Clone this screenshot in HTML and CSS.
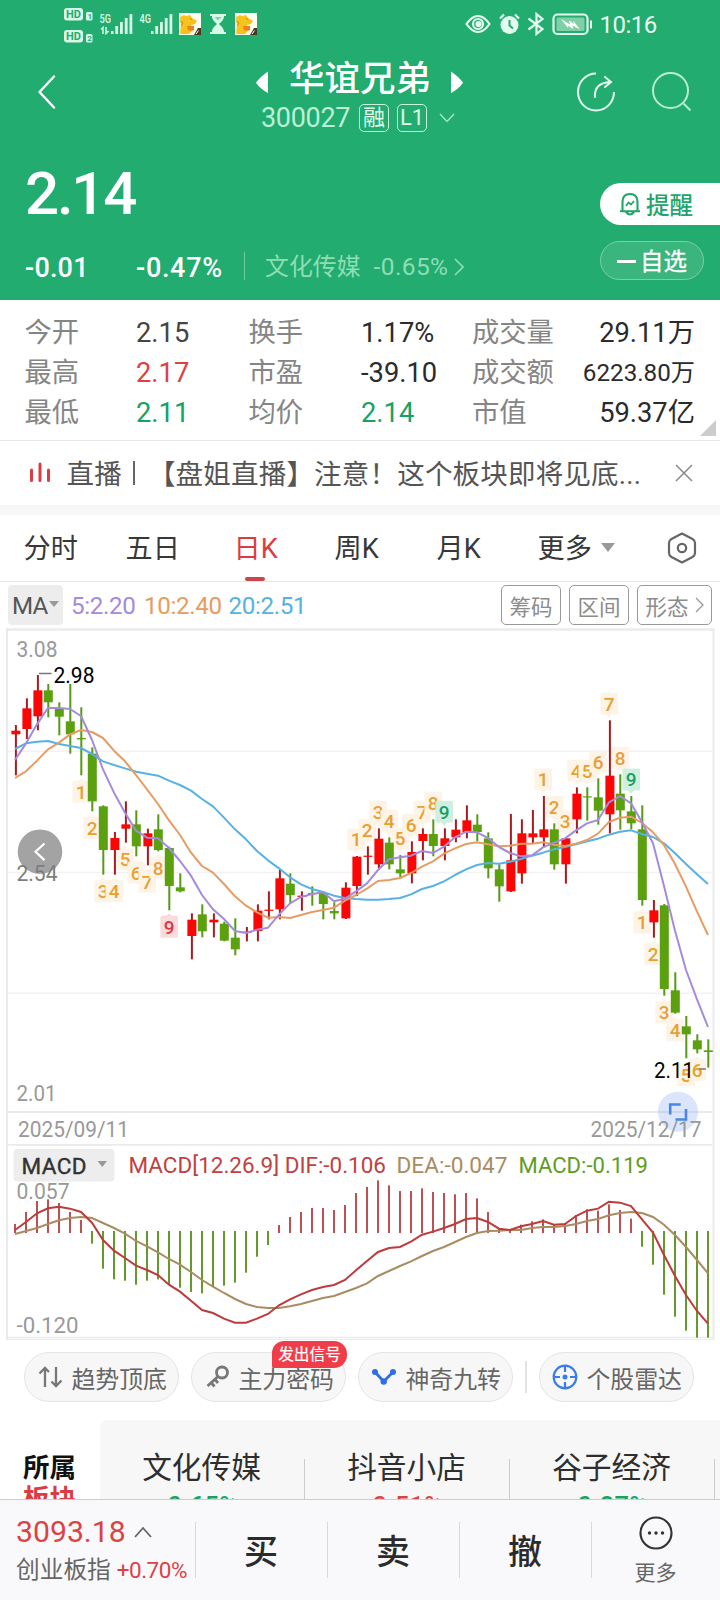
FILE: index.html
```html
<!DOCTYPE html>
<html lang="zh-CN">
<head>
<meta charset="utf-8">
<title>华谊兄弟 300027</title>
<link rel="stylesheet" href="styles.css">
</head>
<body>
<div class="app">
  <header class="quote">
    <div class="status">
      <svg class="status-left" width="200" height="44" viewBox="60 0 200 44">
        <g fill="#d9f9e8">
          <rect x="64" y="8" width="19" height="12.5" rx="3"/>
          <rect x="86" y="12" width="6.500" height="8.500" rx="1.500"/>
          <rect x="64" y="30" width="19" height="12.500" rx="3"/>
          <rect x="86" y="34" width="6.500" height="8.500" rx="1.500"/>
        </g>
        <g class="tiny-dark">
          <text x="66" y="18.300" textLength="15">HD</text><text class="sub" x="87.500" y="19">1</text>
          <text x="66" y="40.300" textLength="15">HD</text><text class="sub" x="87.200" y="41">2</text>
        </g>
        <g class="tiny-light">
          <text x="99.500" y="23" textLength="11.500" lengthAdjust="spacingAndGlyphs">5G</text>
          <text x="139.500" y="23" textLength="11.500" lengthAdjust="spacingAndGlyphs">4G</text>
        </g>
        <path d="M101 29.500l2-2v6.500M106 27v6.500l2.500-2.500" fill="none" stroke="#d9f9e8" stroke-width="1.500"/>
        <g fill="#d9f9e8">
          <path d="M111 31h2.500v3H111zM115.300 26h2.800v8h-2.800zM120 22h2.800v12H120zM124.800 18h2.800v16h-2.800zM129.500 14h2.800v20h-2.800z"/>
          <path d="M151 31h2.500v3H151zM155.300 26h2.800v8h-2.800zM160 22h2.800v12H160zM164.800 18h2.800v16h-2.800zM169.500 14h2.800v20h-2.800z"/>
          <path d="M210 14h16v2h-2c0 4-3 6-5 8 2 2 5 4 5 8h2v2h-16v-2h2c0-4 3-6 5-8-2-2-5-4-5-8h-2z"/>
        </g>
        <path d="M214.500 17h7l-3.500 3.500z" fill="#22ac6f" opacity=".5"/>
        <g id="mascot">
          <rect x="179" y="13" width="22" height="22" fill="#fffdf0"/>
          <path d="M180 17l4-2 2 1 4-1 2 3 5 3-2 3-4 1 1 6-3 3h-9c1-3 0-5 1-8z" fill="#f7c21b"/>
          <path d="M187 26h7v4.500h-6z" fill="#ee8020"/><path d="M180 21l3 2-2 3M190 19h2" stroke="#c98a10" fill="none"/>
          <path d="M194 35l4-7h3v7z" fill="#47391f"/><path d="M196 34l2.500-3.500" stroke="#fff"/>
        </g>
        <use href="#mascot" x="56"/>
      </svg>
      <svg class="status-right" width="130" height="44" viewBox="462 0 130 44">
        <g fill="none" stroke="#e4fbef" stroke-width="2.200">
          <path d="M466.500 24q5.500-8 11.500-8t11.500 8q-5.500 8-11.500 8t-11.500-8z"/>
          <circle cx="478" cy="24" r="5"/><circle cx="478.500" cy="24" r="2" fill="#e4fbef"/>
          <path d="M500 18.500l4-4M519 18.500l-4-4"/>
          <path d="M528.500 18.500l14 10.500-6 5V14l6 5-14 10.500"/>
          <rect x="553.500" y="14.500" width="34" height="19.500" rx="4"/>
        </g>
        <circle cx="509.500" cy="25" r="9" fill="#e4fbef"/><path d="M509.500 20v5.500l3.500 3" fill="none" stroke="#22ac6f" stroke-width="2"/>
        <path d="M590 20.500h2v8h-2z" fill="#e4fbef"/>
        <rect x="556.500" y="17.500" width="28" height="13.500" rx="1.500" fill="#7fd0a8"/>
        <path d="M561 19l9 5.500-1-4 5 3.500-1-3.500 7 9-7.500-4 1 3.500-6-3.500 1 3z" fill="#fff"/>
      </svg>
      <span class="clock">10:16</span>
    </div>
    <div class="titlebar">
      <svg class="back" width="20" height="36" viewBox="0 0 20 36"><path d="M17 2.500L2.500 18 17 33.500" fill="none" stroke="#fff" stroke-width="2.500" stroke-linecap="round" stroke-linejoin="round"/></svg>
      <div class="stock">
        <div class="stock-name">
          <svg width="13" height="24" viewBox="0 0 13 24"><path d="M0 12.500Q4 6 12 0v24Q4 19 0 12.500z" transform="translate(0 2.500) scale(1 .9)" fill="#fff"/></svg>
          <h1>华谊兄弟</h1>
          <svg width="13" height="24" viewBox="0 0 13 24"><path d="M12 12.500Q8 6 0 0v24Q8 19 12 12.500z" transform="translate(0 2.500) scale(1 .9)" fill="#fff"/></svg>
        </div>
        <div class="stock-code"><span class="code">300027</span><span class="badge">融</span><span class="badge">L1</span>
          <svg width="16" height="10" viewBox="0 0 16 10"><path d="M1 1l7 7.500L15 1" fill="none" stroke="#a6e3c5" stroke-width="1.500"/></svg></div>
      </div>
      <div class="actions">
        <svg width="40" height="42" viewBox="0 0 40 42" fill="none" stroke="#e6fbf0" stroke-width="2"><path d="M20 2.500A18 18.500 0 1 0 38 21"/><path d="M19 26q-1-14 15-15M29 6l6 5-6 5" stroke-linecap="round"/></svg>
        <svg width="42" height="42" viewBox="0 0 42 42" fill="none" stroke="#b9ecd2" stroke-width="2"><circle cx="19.500" cy="19.500" r="17.500"/><path d="M32.500 32.500l7 7"/></svg>
      </div>
    </div>
    <div class="price-row">
      <strong class="price">2.14</strong>
      <button class="remind"><svg width="22" height="24" viewBox="0 0 22 24" fill="none" stroke="#22a56b" stroke-width="2.100"><path d="M3.500 19V10Q3.500 2 11 2t7.500 8v9M1 19.300h20M7 20q4 5 8 0"/><path d="M7 14l2.500-3.500 2.500 2 3-3.500" stroke-width="1.700"/></svg>提醒</button>
    </div>
    <div class="change-row">
      <span class="chg">-0.01</span><span class="pct">-0.47%</span>
      <span class="sector"><span>文化传媒</span><span class="sector-pct">-0.65%</span><svg width="10" height="18" viewBox="0 0 10 18"><path d="M1 1l8 8-8 8" fill="none" stroke="#8fddb6" stroke-width="1.600"/></svg></span>
      <button class="watch"><i></i>自选</button>
    </div>
  </header>

  <section class="stats">
    <span class="k">今开</span><span class="v">2.15</span><span class="k">换手</span><span class="v dark">1.17%</span><span class="k">成交量</span><span class="v dark r">29.11万</span>
    <span class="k">最高</span><span class="v up">2.17</span><span class="k">市盈</span><span class="v dark">-39.10</span><span class="k">成交额</span><span class="v dark r small">6223.80万</span>
    <span class="k">最低</span><span class="v down">2.11</span><span class="k">均价</span><span class="v down">2.14</span><span class="k">市值</span><span class="v dark r">59.37亿</span>
    <i class="corner"></i>
  </section>

  <section class="notice">
    <svg width="22" height="22" viewBox="0 0 22 22" stroke="#dd3c42" stroke-width="3" stroke-linecap="round"><path d="M2.500 8v10.500M11 2v16.500M19.500 8v10.500"/></svg>
    <p><span>直播</span><i></i><span>【盘姐直播】注意！这个板块即将见底...</span></p>
    <svg width="18" height="18" viewBox="0 0 18 18"><path d="M1 1l16 16M17 1L1 17" stroke="#888" stroke-width="1.500"/></svg>
  </section>

  <nav class="tabs">
    <span class="tab t1">分时</span><span class="tab t2">五日</span><span class="tab t3 on">日K</span><span class="tab t4">周K</span><span class="tab t5">月K</span><span class="tab t6">更多<i class="tri"></i></span>
    <svg width="30" height="32" viewBox="0 0 30 32" fill="none" stroke="#666" stroke-width="2.200"><path d="M15 1.500l10.500 5.500q2.500 1.500 2.500 4v10q0 2.500-2.500 4L15 30.500 4.500 25Q2 23.500 2 21V11q0-2.500 2.500-4z" stroke-linejoin="round"/><circle cx="15" cy="16" r="4.200"/></svg>
  </nav>

  <section class="ma">
    <span class="ma-btn">MA<i class="tri"></i></span>
    <span class="m5">5:2.20</span><span class="m10">10:2.40</span><span class="m20">20:2.51</span>
    <span class="chips"><button>筹码</button><button>区间</button><button class="wide">形态<svg width="9" height="16" viewBox="0 0 9 16"><path d="M1 1l7 7-7 7" fill="none" stroke="#999" stroke-width="1.300"/></svg></button></span>
  </section>

  <svg class="chart" id="chart" width="720" height="712" viewBox="0 628 720 712">
    <g fill="#ebebeb">
      <path d="M6 628.200h708v2.600H6z"/><path d="M6 628h2v712H6zM712.500 628h2v712h-2z"/>
      <path d="M8 750.500h704v1.500H8zM8 871.800h704v1.500H8zM8 992.500h704v1.500H8z" fill="#f2f2f2"/>
      <path d="M8 1111h704v2H8zM8 1144h704v1.800H8zM6 1336.800h708v1.400H6zM6 1339h708v1H6z"/>
    </g>
    <g class="axis">
      <text x="16.500" y="656.700" textLength="41" lengthAdjust="spacingAndGlyphs">3.08</text>
      <text x="16.500" y="1101" textLength="40" lengthAdjust="spacingAndGlyphs">2.01</text>
      <text x="18" y="1136.700" textLength="111" lengthAdjust="spacingAndGlyphs">2025/09/11</text>
      <text x="16.500" y="1199" textLength="53" lengthAdjust="spacingAndGlyphs">0.057</text>
      <text x="16.500" y="1332.700" textLength="62" lengthAdjust="spacingAndGlyphs">-0.120</text>
    </g>
    <g id="tags"></g>
    <g id="candles"></g>
    <g id="lines" fill="none" stroke-width="2" stroke-linejoin="round"></g>
    <g id="macd"></g>
    <path d="M39 673.500h12.500M699 1069h7" stroke="#777" stroke-width="1.500"/>
    <g class="peak">
      <text x="53.500" y="682.700" textLength="41" lengthAdjust="spacingAndGlyphs">2.98</text>
      <text x="654" y="1077.500" textLength="40" lengthAdjust="spacingAndGlyphs">2.11</text>
    </g>
    <circle cx="40" cy="851.700" r="22.300" fill="#a3a3a3"/>
    <path d="M44.500 843.500l-9 8.300 9 8.300" fill="none" stroke="#fff" stroke-width="2.200"/>
    <text class="axis-over" x="16.500" y="880.900" textLength="41" lengthAdjust="spacingAndGlyphs">2.54</text>
    <circle cx="678" cy="1111.700" r="20" fill="#4a84f0" opacity=".2"/>
    <g class="axis"><text x="590.500" y="1136.700" textLength="111" lengthAdjust="spacingAndGlyphs">2025/12/17</text></g>
    <path d="M670.200 1114.500v-10h10.500M686 1109v10.500h-10.500" fill="none" stroke="#4a86e6" stroke-width="2.600"/>
    <rect x="13.500" y="1149" width="101" height="32.500" rx="4" fill="#ededed"/>
    <path d="M97.500 1161h9.500l-4.700 6z" fill="#999"/>
    <g class="legend">
      <text class="lg-btn" x="21.500" y="1173.500" textLength="65">MACD</text>
      <text x="128.500" y="1172.700" textLength="257.500" lengthAdjust="spacingAndGlyphs" fill="#c0413f">MACD[12.26.9] DIF:-0.106</text>
      <text x="396.500" y="1172.700" textLength="111" lengthAdjust="spacingAndGlyphs" fill="#a98c62">DEA:-0.047</text>
      <text x="518.500" y="1172.700" textLength="129.500" lengthAdjust="spacingAndGlyphs" fill="#5f9c22">MACD:-0.119</text>
    </g>
  </svg>

  <section class="tools">
    <button class="pill"><svg width="25" height="24" viewBox="0 0 25 24" fill="none" stroke="#777" stroke-width="2.300"><path d="M7 22V3M1.500 8.500L7 3l4 4M18 2v19M13.500 16.500l4.500 4.500 5.500-5.500"/></svg>趋势顶底</button>
    <button class="pill"><svg width="24" height="24" viewBox="0 0 24 24" fill="none" stroke="#777" stroke-width="2.800"><circle cx="16" cy="7.500" r="5.500"/><path d="M12 11.500L1.500 21M5 17.500l3.500 4M9 14.500l3 3.500"/></svg>主力密码<em>发出信号</em></button>
    <button class="pill"><svg width="26" height="24" viewBox="0 0 26 24"><path d="M4 7l8.700 9.500L22 7" fill="none" stroke="#2f6fe4" stroke-width="2.800"/><g fill="#2f6fe4"><circle cx="4" cy="7" r="3"/><circle cx="12.700" cy="16.500" r="3.200"/><circle cx="22" cy="7" r="3"/></g></svg>神奇九转</button>
    <i class="bar"></i>
    <button class="pill"><svg width="26" height="26" viewBox="0 0 26 26" fill="none" stroke="#3b7de8" stroke-width="2.200"><circle cx="13" cy="13" r="11.300"/><path d="M13 2v6M13 18v6M2 13h6M18 13h6"/><circle cx="13" cy="13" r="1.400" fill="#3b7de8"/></svg>个股雷达</button>
  </section>

  <section class="blocks">
    <div class="blocks-title"><span>所属</span><span class="red">板块</span></div>
    <div class="blocks-list">
      <div class="cell"><b>文化传媒</b><span class="down">-0.65%</span></div>
      <div class="cell"><b>抖音小店</b><span class="up">-0.51%</span></div>
      <div class="cell"><b>谷子经济</b><span class="down">-0.27%</span></div>
    </div>
  </section>

  <footer class="trade">
    <div class="index">
      <div class="index-val">3093.18<svg width="18" height="12" viewBox="0 0 18 12"><path d="M1 11l8-9 8 9" fill="none" stroke="#666" stroke-width="1.800"/></svg></div>
      <div class="index-name">创业板指<span>+0.70%</span></div>
    </div>
    <div class="act">买</div><div class="act">卖</div><div class="act">撤</div>
    <div class="more"><svg width="34" height="34" viewBox="0 0 34 34"><circle cx="17" cy="17" r="15.500" fill="none" stroke="#333" stroke-width="2.200"/><g fill="#333"><circle cx="10.500" cy="17" r="1.700"/><circle cx="17" cy="17" r="1.700"/><circle cx="23.500" cy="17" r="1.700"/></g></svg><span>更多</span></div>
  </footer>
</div>
<script src="chart.js"></script>
</body>
</html>
```

FILE: styles.css
```css
* { box-sizing: border-box; }
body { margin: 0; background: #fff; font-family: Roboto, "Noto Sans CJK SC", sans-serif; color: #333; text-spacing-trim: space-all; }
button { font: inherit; color: inherit; border: 0; padding: 0; margin: 0; background: none; white-space: nowrap; }
h1, p { margin: 0; }
i, em { font-style: normal; display: block; }
svg { display: block; flex: none; }
.app { width: 720px; height: 1600px; overflow: hidden; display: flex; flex-direction: column; }
.up { color: #db4343; }
.down { color: #14a362; }

/* header */
.quote { height: 300px; flex: none; background: #22ac6f; color: #fff; }
.status { height: 50px; padding-left: 60px; display: flex; align-items: flex-start; }
.status-right { margin-left: 202px; }
.clock { margin: 8.500px 0 0 7.500px; font-size: 24px; line-height: 32px; letter-spacing: -.5px; color: #e9fcf2; }
.tiny-dark text { font: 700 11px Roboto, sans-serif; fill: #22ac6f; }
.tiny-dark .sub { font-size: 8px; }
.tiny-light text { font: 500 13px Roboto, sans-serif; fill: #d9f9e8; }
.titlebar { height: 90px; display: grid; grid-template-columns: 200px 1fr 200px; }
.back { margin: 24px 0 0 37px; }
.stock { padding-top: 7px; }
.stock-name { display: flex; align-items: center; justify-content: center; gap: 20px; height: 44px; }
.stock-name svg { margin-top: 3px; }
.stock-name h1 { font-size: 35.500px; font-weight: 500; line-height: 44px; }
.stock-code { display: flex; align-items: center; height: 33px; padding-left: 61px; }
.code { font-size: 27px; color: #bdf0d6; letter-spacing: -.3px; width: 98px; padding-top: 1px; }
.badge { width: 30px; height: 28px; margin-right: 8px; border: 1.500px solid #c9f3dd; border-radius: 5px; font-size: 22px; line-height: 26px; text-align: center; color: #dffaec; }
.badge + .badge { margin-right: 12px; }
.actions { display: flex; padding: 21px 0 0 56px; gap: 35px; }
.price-row { height: 95px; display: flex; justify-content: space-between; padding-left: 25px; }
.price { font-size: 60px; font-weight: 500; line-height: 60px; padding-top: 24px; letter-spacing: -2.200px; }
.remind { align-self: flex-start; margin-top: 43px; width: 120px; height: 42px; border-radius: 21px 0 0 21px; background: #fff; color: #22a56b; font-size: 23.500px; font-weight: 500; display: flex; align-items: center; gap: 5px; padding-left: 19px; }
.change-row { height: 65px; display: flex; padding-left: 25px; font-size: 27px; line-height: 66px; }
.chg { width: 111px; letter-spacing: .2px; font-weight: 500; }
.pct { width: 108px; letter-spacing: .7px; font-weight: 500; }
.sector { display: flex; align-items: center; font-size: 23.900px; color: #8fddb6; flex: 1; height: 28px; margin-top: 17px; border-left: 1.500px solid #6ecb9e; padding: 2px 0 0 20px; }
.sector-pct { margin: 0 6px 0 13px; font-size: 24.500px; letter-spacing: .4px; }
.watch { width: 104px; height: 39px; margin: 6px 16px 0 0; border: 1.500px solid #7ad0a6; border-radius: 20px; background: #3ab57e; font-size: 23.500px; line-height: 38px; display: flex; align-items: center; justify-content: center; gap: 4px; -webkit-text-stroke: .3px #fff; padding-top: 2px; }
.watch i { width: 19px; height: 2.200px; background: #fff; }

/* key figures */
.stats { position: relative; height: 141px; flex: none; padding: 13px 25px 0 24.500px; border-bottom: 1px solid #e6e6e6; display: grid; grid-template-columns: 111.500px 112.500px 112.500px 111px 96px 1fr; grid-auto-rows: 40px; font-size: 27.300px; line-height: 40px; white-space: nowrap; }
.k { color: #858585; }
.v { color: #444; }
.v.up { color: #db4343; }
.v.down { color: #14a362; }
.v.dark { color: #2b2b2b; }
.r { text-align: right; }
.small { font-size: 24.200px; }
.corner { position: absolute; right: 4px; bottom: 4px; border: 8px solid transparent; border-right-color: #ccc; border-bottom-color: #ccc; }

/* live notice */
.notice { height: 74px; flex: none; border-bottom: 10px solid #f7f7f7; padding: 0 27px 0 29px; display: flex; align-items: center; }
.notice p { width: 608px; margin-left: 15.500px; padding-top: 3px; display: flex; align-items: center; font-size: 27.500px; line-height: 40px; color: #555; white-space: nowrap; letter-spacing: .2px; }
.notice p i { width: 2px; height: 24px; margin: 0 13px 3px 11px; background: #666; }

/* period tabs */
.tabs { height: 67px; flex: none; border-bottom: 1.500px solid #e6e6e6; display: flex; align-items: center; padding-left: 23.500px; font-size: 27.200px; color: #383838; }
.tab { position: relative; line-height: 64px; padding-top: 2px; white-space: nowrap; }
.t1 { width: 102px; } .t2 { width: 108px; } .t3 { width: 101px; } .t4 { width: 102px; } .t5 { width: 101px; } .t6 { width: 129.500px; display: flex; align-items: center; gap: 9px; }
.on { color: #dd3b42; }
.on::after { content: ""; position: absolute; left: 11px; bottom: 0; width: 20px; height: 4px; border-radius: 2px; background: #c9474c; }
.tri { border: 7px solid transparent; border-top: 9px solid #999; border-bottom: 0; }
.t6 .tri { margin-top: -3px; }

/* moving averages */
.ma { height: 46px; flex: none; display: flex; align-items: center; padding: 0 8px; font-size: 24.200px; white-space: nowrap; }
.ma-btn { width: 55px; height: 40px; margin-right: 8px; border-radius: 4px; background: #ededed; color: #555; padding: 1px 0 0 4px; display: flex; align-items: center; letter-spacing: -.8px; }
.ma-btn .tri { border-width: 6px 5px 0; margin: -4px 0 0 1px; }
.m5 { width: 73px; color: #a58bdc; }
.m10 { width: 84.500px; color: #e89c62; }
.m20 { color: #55b2e2; }
.m5, .m10, .m20 { letter-spacing: -.35px; padding-top: 1px; }
.chips { margin-left: auto; display: flex; gap: 8px; }
.chips button { width: 60px; height: 40px; border: 1.500px solid #999; border-radius: 5px; font-size: 21.500px; color: #8c8c8c; display: flex; align-items: center; justify-content: center; gap: 6px; }
.chips .wide { width: 75px; }

/* chart */
.chart { flex: none; font-family: Roboto, sans-serif; }
.axis text, .axis-over { font-size: 22px; fill: #999; }
.axis .axis-over, .axis-over { fill: #7d7d7d; }
.peak text { font-size: 22px; fill: #000; }
.legend text { font-size: 22px; stroke-width: .2px; }
.legend .lg-btn { font-size: 22.500px; fill: #333; stroke: #333; stroke-width: .4px; }
.tag { font-size: 19px; font-weight: 500; text-anchor: middle; }

/* tool pills */
.tools { height: 80px; flex: none; display: flex; padding: 12px 0 0 24px; gap: 12px; }
.pill { position: relative; width: 155px; height: 50px; border: 1.500px solid #e4e4e4; border-radius: 25px; background: #f7f7f7; font-size: 23.900px; color: #666; display: flex; align-items: center; justify-content: flex-end; gap: 8px; padding-right: 11px; }
.pill em { position: absolute; left: 80px; top: -12.500px; width: 75px; height: 27px; border-radius: 12px 13px 13px 2px; background: #ef3e4a; color: #fff; font-size: 15.700px; line-height: 27px; text-align: center; -webkit-text-stroke: .2px #fff; }
.bar { width: 2px; height: 32px; margin: 9px 0 0; background: #e2e2e2; }

/* sector blocks */
.blocks { height: 79px; flex: none; overflow: hidden; display: flex; }
.blocks-title { width: 100px; padding: 32px 0 0 23px; font-size: 26.500px; font-weight: 700; line-height: 31px; color: #111; }
.blocks-title span { display: block; }
.blocks-title .red { color: #dd3b42; }
.blocks-list { flex: 1; height: 140px; background: #f7f7f7; border-top-left-radius: 8px; display: flex; overflow: hidden; }
.cell { position: relative; width: 205px; flex: none; text-align: center; padding-top: 26px; }
.cell::after { content: ""; position: absolute; right: 0; top: 39px; width: 1px; height: 60px; background: #ccc; }
.cell b { display: block; font-size: 29.700px; font-weight: 400; line-height: 44px; color: #2e2e2e; margin-right: 2px; }
.cell span { display: block; font-size: 25.500px; font-weight: 500; line-height: 30px; margin: 1px 8px 0 0; letter-spacing: .3px; }

/* trade bar */
.trade { height: 101px; flex: none; border-top: 1.500px solid #ccc; background: #f9f9fb; display: flex; }
.index { width: 195px; flex: none; padding: 14px 0 0 16px; white-space: nowrap; }
.index-val { font-size: 30.200px; line-height: 36px; color: #db4343; display: flex; align-items: center; gap: 8px; }
.index-name { font-size: 23.700px; line-height: 36px; margin-top: 2px; color: #666; display: flex; gap: 6px; }
.index-name span { font-size: 22.500px; color: #db4343; letter-spacing: -.5px; }
.act { width: 132px; flex: none; text-align: center; font-size: 34px; font-weight: 500; line-height: 105px; color: #2b2b2b; background: linear-gradient(#d8d8d8, #d8d8d8) 0 22px / 1px 56px no-repeat; }
.more { flex: 1; background: linear-gradient(#d8d8d8, #d8d8d8) 0 22px / 1px 56px no-repeat; display: flex; flex-direction: column; align-items: center; padding-top: 16px; font-size: 21px; line-height: 34px; color: #666; gap: 6px; }
```

FILE: chart.js
```javascript
// Candles: direction, high, body top, body bottom, low. Each group is measured
// in thirds of a pixel from its own vertical origin.
var groups = [
  [620, [['R',315,332,343,466],['R',235,265,327,357],['R',165,211,289,331],['G',192,211,247,292],['G',247,265,290,346],['G',192,304,343,401],['G',262,354,358,466],['G',382,401,544,574],['G',556,559,690,764],['R',636,654,690,764],['R',544,613,626,668],['G',571,613,679,709],['R',626,640,679,736],['G',583,628,690,694],['G',680,684,798,871],['G',760,802,814,817],['R',880,899,948,1018],['G',853,883,934,952],['R',880,899,907,952],['G',905,911,962,964],['G',895,953,988,1006],['R',921,935,938,964]]],
  [740, [['R',493,512,573,604],['R',454,509,512,538],['R',389,415,508,538],['G',400,431,465,490],['R',454,467,469,512],['G',439,459,462,497],['G',455,459,492,538],['G',487,513,520,538],['R',427,443,535,537],['R',348,350,438,468],['R',319,347,350,404],['R',265,296,373,385],['G',292,308,373,388],['G',345,388,400,412],['R',304,336,400,430],['R',265,282,303,361],['G',238,282,318,349],['R',265,295,318,361],['R',238,269,292,307],['R',196,241,277,295],['G',223,254,276,303]]],
  [660, [['G',517,535,625,655],['G',613,628,679,725],['R',462,601,694,696],['R',478,520,640,671],['R',450,520,532,550],['R',408,508,532,562],['G',490,508,613,629],['R',534,535,613,671],['R',382,401,478,520],['G',382,409,412,482],['G',355,412,452,494],['R',181,347,463,520],['G',343,401,451,509],['G',408,454,490,508],['G',436,508,720,737]]],
  [880, [['R',60,91,127,173],['G',72,76,327,347],['G',277,331,398,401],['G',408,439,463,535],['G',463,481,508,520],['G',478,511,516,563]]]
];
var averages = {
  '#55b2e2': [[620,[387,370,365,363,372,378,384,402,424,435,445,455,461,467,482,495,512,537,559,593,628]],[740,[298,333,361,385,412,433,447,456,467,474,477,479,479,477,474,463,447,438,424,405,388,375]],[660,[609,611,605,597,587,578,568,561,553,544,536,524,515,511,522,531,550,580,612,643,672]]],
  '#e89c62': [[620,[474,454,422,388,368,343,330,336,354,392,424,465,508,552,601,645,698,738,758,792,829]],[740,[497,517,533,531,534,525,516,510,503,482,465,446,423,420,414,399,380,364,341,325,312,307]],[660,[553,559,557,551,551,547,554,558,551,540,521,486,473,470,489,517,555,612]],[880,[20,95,165]]],
  '#a58bdc': [[620,[420,370,313,264,264,267,288,360,448,518,578,632,653,655,684,723,767,825,868,897,933]],[740,[579,569,563,524,490,471,462,457,484,476,454,430,390,358,352,347,333,339,320,292,275,277]],[660,[534,561,579,589,586,562,548,535,511,490,480,427,408,430,487,550]],[880,[18,152,270,358,441]]]
};
var bars = [282,246,213,208,219,246,270,341,416,448,452,464,452,448,465,473,486,490,468,467,458,428,380,345,285,261,246,234,234,240,225,189,171,151,166,183,183,175,186,189,193,189,205,246,295,300,284,274,268,285,280,255,238,242,223,240,266,350,404,494,560,602,623,623];
var dif = [300,276,250,235,230,236,246,278,330,362,384,407,420,435,464,485,512,540,549,566,578,578,566,552,526,508,493,480,471,465,450,421,393,366,354,351,335,314,305,294,282,267,264,276,296,300,289,282,273,284,282,258,242,236,215,218,228,268,308,375,438,495,543,581];
var dea = [312,303,294,282,271,264,261,264,279,294,311,333,349,367,387,404,426,450,470,489,507,522,531,534,534,529,522,513,504,498,486,474,460,438,423,408,394,378,363,351,336,321,309,303,302,300,300,294,291,291,288,282,273,267,256,249,246,249,261,284,315,351,390,430];

function x(i) { return 15 + 11 * i; }
function rect(cx, w, top, bottom, color) {
  return '<rect x="' + (cx - w / 2) + '" y="' + top + '" width="' + w + '" height="' + Math.max(bottom - top, 1.2) + '" fill="' + color + '"/>';
}
function line(ys, color) {
  return '<polyline stroke="' + color + '" points="' + ys.map(function (y, i) { return x(i) + ',' + y; }).join(' ') + '"/>';
}
function flatten(parts) {
  return parts.reduce(function (all, p) {
    return all.concat(p[1].map(function (v) { return p[0] + v / 3; }));
  }, []);
}

var candles = [];
groups.forEach(function (g) {
  g[1].forEach(function (c) {
    candles.push({ up: c[0] === 'R', v: c.slice(1).map(function (n) { return g[0] + n / 3; }) });
  });
});
document.getElementById('candles').innerHTML = candles.map(function (c, i) {
  var cx = x(i) + (c.up ? 0.9 : 0.3);
  return rect(cx, 2, c.v[0], c.v[3], c.up ? '#a81c20' : '#569a16') +
    rect(cx, 9, c.v[1], c.v[2], c.up ? '#fb0505' : '#5aa00f');
}).join('');

// Nine-turn counters sit above or below their candle.
function tag(i, n, above, nineColor, nineFill) {
  var c = candles[i].v, base = above ? c[0] - 9.7 : c[3] + 23.3;
  var top = base - 17.8, cx = x(i) + 0.2;
  var fill = n === 9 ? nineFill : '#fdf3e6';
  var tip = above ? 'M' + (cx - 3) + ' ' + (top + 21.5) + 'h6l-3 3.500z' : 'M' + (cx - 3) + ' ' + (top + 0.2) + 'h6l-3 -2.800z';
  return '<rect x="' + (cx - 8.8) + '" y="' + top + '" width="17.600" height="22" rx="1.500" fill="' + fill + '" opacity=".95"/>' +
    '<path d="' + tip + '" fill="' + fill + '"/>' +
    '<text class="tag" x="' + cx + '" y="' + base + '" fill="' + (n === 9 ? nineColor : '#e8a030') + '">' + n + '</text>';
}
var tags = '';
[[6, 9, false], [31, 9, true], [48, 9, true], [57, 6, false]].forEach(function (run) {
  for (var n = 1; n <= run[1]; n++) {
    tags += tag(run[0] + n - 1, n, run[2], run[2] ? '#18a064' : '#db3a45', run[2] ? '#cdeedd' : '#fcd9da');
  }
});
document.getElementById('tags').innerHTML = tags;

document.getElementById('lines').innerHTML = Object.keys(averages).map(function (color) {
  return line(flatten(averages[color]), color);
}).join('');

var toY = function (v) { return 1130 + v / 3; };
document.getElementById('macd').innerHTML = bars.map(function (v, i) {
  return v > 310 ? rect(x(i), 2, 1231, toY(v), '#659a2b') : rect(x(i), 1.9, toY(v), 1233, '#bd474b');
}).join('') + '<g fill="none" stroke-width="2">' + line(dea.map(toY), '#a98c62') + line(dif.map(toY), '#bd3b3b') + '</g>';
```
